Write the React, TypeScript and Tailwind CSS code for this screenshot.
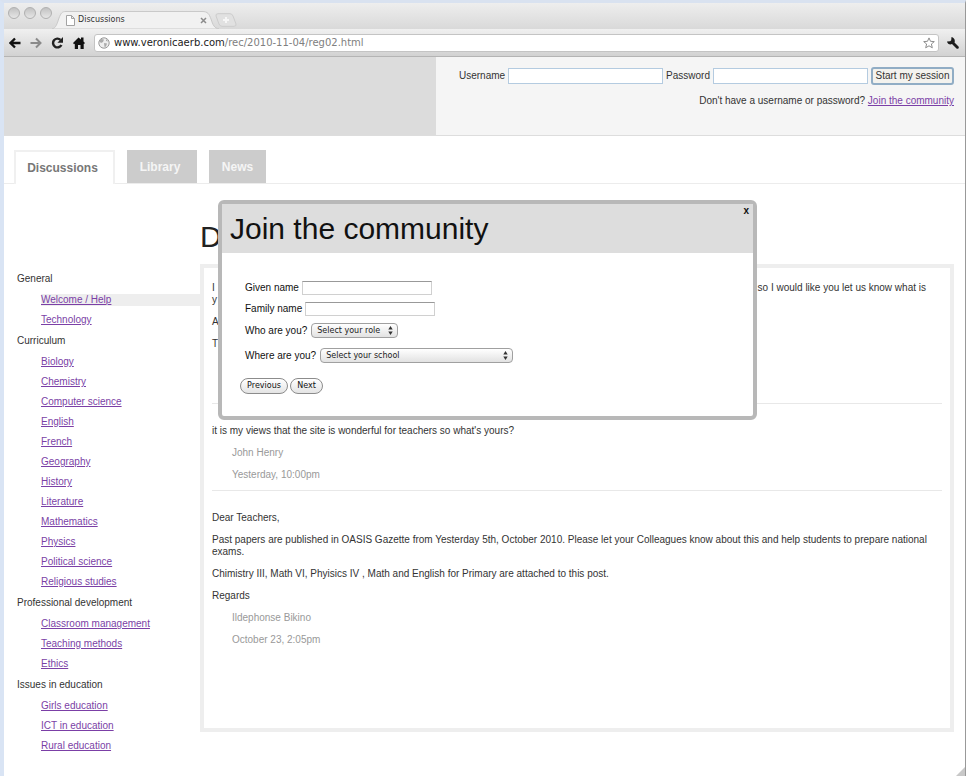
import type { ReactNode } from "react";

const groups = [
  { title: "General", items: ["Welcome / Help", "Technology"] },
  {
    title: "Curriculum",
    items: [
      "Biology",
      "Chemistry",
      "Computer science",
      "English",
      "French",
      "Geography",
      "History",
      "Literature",
      "Mathematics",
      "Physics",
      "Political science",
      "Religious studies",
    ],
  },
  {
    title: "Professional development",
    items: ["Classroom management", "Teaching methods", "Ethics"],
  },
  {
    title: "Issues in education",
    items: ["Girls education", "ICT in education", "Rural education"],
  },
];

function BrowserChrome() {
  return (
    <header className="border-b border-[#b4b4b4] font-['DejaVu_Sans',sans-serif]">
      <div className="flex h-[26px] items-end bg-linear-to-b from-[#eeeeee] to-[#d9d9d9]">
        <div className="flex gap-1 self-start pt-1 pl-1">
          {["Close window", "Minimize window", "Zoom window"].map((name) => (
            <button
              key={name}
              aria-label={name}
              className="size-3 rounded-full border border-[#b0b0b0] bg-linear-to-b from-[#c2c2c2] to-[#e6e6e6]"
            />
          ))}
        </div>
        <div className="relative flex h-[18px] w-[167px] items-center pr-[12px] pl-[13px]">
          <svg className="absolute inset-0" width="167" height="18" viewBox="0 0 167 18" aria-hidden="true">
            <path
              d="M0 18C4 17 5 13 7 7C9 2 10 .5 14 .5H150C156 .5 157 3 159 8C161 14 162 17 167 18Z"
              fill="#f1f1f1"
              stroke="#c9c9c9"
            />
          </svg>
          <svg className="relative ml-px" width="9" height="11" viewBox="0 0 9 11" aria-hidden="true">
            <path d="M.5.5H5.5L8.5 3.5V10.5H.5ZM5.5.5V3.5H8.5" fill="#fff" stroke="#a3a3a3" />
          </svg>
          <span className="relative ml-[3px] text-[8px] leading-3 text-[#333]">Discussions</span>
          <button aria-label="Close tab" className="relative ml-auto">
            <svg width="7" height="7" viewBox="0 0 7 7" aria-hidden="true">
              <path d="M1 1L6 6M6 1L1 6" stroke="#8c8c8c" strokeWidth="1.5" />
            </svg>
          </button>
        </div>
        <button aria-label="New tab" className="mb-[2px] -ml-1">
          <svg width="22" height="14" viewBox="0 0 22 14" aria-hidden="true">
            <path
              d="M3 .7H15Q17 .7 18 3L21 11Q21.500 13.300 19 13.300H7Q5 13.300 4 11L1 3Q.5 .7 3 .7Z"
              fill="#e1e1e1"
              stroke="#cccccc"
            />
            <path d="M11 4V10M8 7H14" stroke="#f6f6f6" strokeWidth="2" />
          </svg>
        </button>
      </div>
      <div className="flex h-[27px] items-center bg-linear-to-b from-[#f0f0f0] to-[#d2d2d2] pr-[6px] pl-[5px]">
        <div className="flex w-[85px] items-center gap-[9px]">
          <button aria-label="Back">
            <svg width="12" height="12" viewBox="0 0 12 12" aria-hidden="true">
              <path d="M11.500 6H2M6 1.500L1.500 6L6 10.500" fill="none" stroke="#111" strokeWidth="2.300" />
            </svg>
          </button>
          <button aria-label="Forward">
            <svg width="12" height="12" viewBox="0 0 12 12" aria-hidden="true">
              <path d="M.5 6H10M6 1.500L10.500 6L6 10.500" fill="none" stroke="#8a8a8a" strokeWidth="2" />
            </svg>
          </button>
          <button aria-label="Reload">
            <svg width="13" height="12" viewBox="0 0 13 12" aria-hidden="true">
              <path d="M9.500 2.800A4.400 4.400 0 1 0 10.400 8" fill="none" stroke="#222" strokeWidth="2.400" />
              <path d="M12 0V5.800H6.400Z" fill="#222" />
            </svg>
          </button>
          <button aria-label="Home">
            <svg width="12" height="12" viewBox="0 0 12 12" aria-hidden="true">
              <path d="M5.500 .5L8 2.500V.5H10.500V4.500L12 6L11 7L10.700 6.800V12H7.500V8H5V12H1.800V6.800L1 7.200L0 6Z" fill="#111" />
            </svg>
          </button>
        </div>
        <div className="flex h-[18px] flex-1 items-center rounded-[3px] border border-[#c4c4c4] bg-white px-[3px]">
          <svg width="12" height="12" viewBox="0 0 12 12" aria-hidden="true">
            <circle cx="6" cy="6" r="5.200" fill="#eee" stroke="#999" />
            <path d="M3 2L6 2.500L5 5L3 6L1 4ZM6 6L9 6.500L8 9.500L6.500 10ZM8 2L10.500 4.500L8 4Z" fill="#aaa" />
          </svg>
          <div className="ml-1 flex-1 text-[10px] leading-4 text-[#808080]">
            <span className="text-[#222]">www.veronicaerb.com</span>/rec/2010-11-04/reg02.html
          </div>
          <button aria-label="Bookmark this page">
            <svg width="12" height="12" viewBox="0 0 12 12" aria-hidden="true">
              <path
                d="M6 .9L7.500 4.300L11.300 4.600L8.400 7L9.300 10.800L6 8.800L2.700 10.800L3.600 7L.7 4.600L4.500 4.300Z"
                fill="#fff"
                stroke="#8c8c8c"
              />
            </svg>
          </button>
        </div>
        <button aria-label="Tools" className="ml-2">
          <svg width="12" height="12" viewBox="0 0 12 12" aria-hidden="true">
            <path
              d="M4.500 0L4.200 3.200L3.200 4.200L0 4.500C.5 7 3 8 5 7L9.500 11.500C11 12.500 12.500 11 11.500 9.500L7.500 5.500C8.500 3 7 .5 4.500 0Z"
              fill="#1c1c1c"
            />
          </svg>
        </button>
      </div>
    </header>
  );
}

function LoginBar() {
  return (
    <div className="flex h-[79px] border-b border-[#dddddd] bg-[#f5f5f5]">
      <div className="w-[45%] bg-[#dcdcdc]" />
      <form className="flex-1 pt-[10px] pr-[11px]" onSubmit={(e) => e.preventDefault()}>
        <div className="flex items-center justify-end">
          <label htmlFor="username">Username</label>
          <input id="username" className="ml-[3px] h-4 w-[155px] border border-[#b4cbe0] bg-white px-1" />
          <label htmlFor="password" className="ml-[3px]">
            Password
          </label>
          <input
            id="password"
            type="password"
            className="ml-[3px] h-4 w-[155px] border border-[#b4cbe0] bg-white px-1"
          />
          <button className="ml-[3px] h-[18px] w-[83px] rounded-[3px] border-2 border-[#91adc5] bg-[#f3f2ee] leading-3 whitespace-nowrap">
            Start my session
          </button>
        </div>
        <p className="mt-[10px] text-right">
          Don't have a username or password?{" "}
          <a href="#join" className="text-[#7b3fa6] underline">
            Join the community
          </a>
        </p>
      </form>
    </div>
  );
}

function Tabs() {
  return (
    <nav className="flex h-12 items-end gap-3 border-b border-[#ececec] pl-[10px] text-[13px] font-bold">
      <a
        href="#discussions"
        className="-mb-px flex h-[34px] w-[101px] items-center justify-center border-2 border-b-0 border-[#f0f0f0] bg-white pr-1 text-[12px] text-[#777777]"
      >
        Discussions
      </a>
      <a
        href="#library"
        className="flex h-[33px] w-[70px] items-center justify-center bg-[#cccccc] pr-1 text-[12px] text-[#f5f5f5]"
      >
        Library
      </a>
      <a
        href="#news"
        className="flex h-[33px] w-[57px] items-center justify-center bg-[#cccccc] text-[12px] text-[#f5f5f5]"
      >
        News
      </a>
    </nav>
  );
}

function Sidebar() {
  return (
    <nav className="w-[196px] pt-[84px]">
      {groups.map((group) => (
        <section key={group.title}>
          <h2 className="ml-[13px] h-[22px] leading-[22px]">{group.title}</h2>
          <ul className="ml-[37px]">
            {group.items.map((item) => (
              <li key={item} className="py-1">
                <a
                  href="#topic"
                  className={
                    item === "Welcome / Help"
                      ? "block bg-[#eeeeee] text-[#7b3fa6] underline"
                      : "block text-[#7b3fa6] underline"
                  }
                >
                  {item}
                </a>
              </li>
            ))}
          </ul>
        </section>
      ))}
    </nav>
  );
}

function Post({ children, author, date }: { children: ReactNode; author?: string; date?: string }) {
  return (
    <article className="flex flex-col gap-[10px]">
      {children}
      <p className="min-h-3 pl-5 text-[#999999]">{author}</p>
      <p className="min-h-3 pl-5 text-[#999999]">{date}</p>
    </article>
  );
}

function Discussions() {
  return (
    <main className="flex-1 pt-[35px] pr-[11px]">
      <h1 className="h-[45px] text-[30px] leading-9 text-[#222]">D</h1>
      <div className="min-h-[468px] border-4 border-[#eeeeee] px-2 pt-[14px]">
        <Post>
          <div>
            <div className="flex justify-between pr-4">
              <span>I</span>
              <span>so I would like you let us know what is</span>
            </div>
            <div>y</div>
          </div>
          <p>A</p>
          <p>T</p>
        </Post>
        <hr className="mt-[9px] mb-[21px] border-[#e8e8e8]" />
        <Post author="John Henry" date="Yesterday, 10:00pm">
          <p>it is my views that the site is wonderful for teachers so what's yours?</p>
        </Post>
        <hr className="mt-[9px] mb-[21px] border-[#e8e8e8]" />
        <Post author="Ildephonse Bikino" date="October 23, 2:05pm">
          <p>Dear Teachers,</p>
          <p>
            Past papers are published in OASIS Gazette from Yesterday 5th, October 2010. Please let your Colleagues know
            about this and help students to prepare national exams.
          </p>
          <p>Chimistry III, Math VI, Phyisics IV , Math and English for Primary are attached to this post.</p>
          <p>Regards</p>
        </Post>
      </div>
    </main>
  );
}

function PopUp({ id, text, width }: { id: string; text: string; width: string }) {
  return (
    <div className={`relative h-[15px] ${width}`}>
      <select
        id={id}
        className="block size-full appearance-none rounded-[4px] border border-[#a0a0a0] bg-linear-to-b from-white to-[#e2e2e2] pl-[5px] font-['DejaVu_Sans',sans-serif] text-[8px] leading-3 text-[#222]"
      >
        <option>{text}</option>
      </select>
      <svg
        className="pointer-events-none absolute top-[3px] right-[5px]"
        width="5"
        height="9"
        viewBox="0 0 5 9"
        aria-hidden="true"
      >
        <path d="M2.500 0L4.700 3.500H.3ZM2.500 9L.3 5.500H4.700Z" fill="#333" />
      </svg>
    </div>
  );
}

function JoinDialog() {
  const field = "h-[14px] w-[130px] border border-[#d0d0d0] border-t-[#999999] bg-white px-1";
  const pill =
    "h-4 rounded-full border border-[#8c8c8c] bg-linear-to-b from-white to-[#e4e4e4] font-['DejaVu_Sans',sans-serif] text-[8px] leading-3";
  return (
    <div
      role="dialog"
      aria-labelledby="join-title"
      className="absolute top-[16px] left-[214px] w-[539px] rounded-[6px] border-4 border-[#b8b8b8] bg-white text-[#111]"
    >
      <div className="flex h-[49px] items-start justify-between bg-[#dddddd] pr-1 pl-[8px]">
        <h2 id="join-title" className="pt-[7px] text-[30px] leading-9">
          Join the community
        </h2>
        <button aria-label="Close" className="pt-[1px] font-bold">
          x
        </button>
      </div>
      <form className="pt-[28px] pb-[22px] pl-[18px]" onSubmit={(e) => e.preventDefault()}>
        <div className="flex flex-col gap-[7px] pl-[5px]">
          <div className="flex items-center gap-[3px]">
            <label htmlFor="given">Given name</label>
            <input id="given" className={field} />
          </div>
          <div className="flex items-center gap-[3px]">
            <label htmlFor="family">Family name</label>
            <input id="family" className={field} />
          </div>
          <div className="flex items-center gap-1">
            <label htmlFor="role">Who are you?</label>
            <PopUp id="role" text="Select your role" width="w-[87px]" />
          </div>
          <div className="mt-[3px] flex items-center gap-1">
            <label htmlFor="school">Where are you?</label>
            <PopUp id="school" text="Select your school" width="w-[193px]" />
          </div>
        </div>
        <div className="mt-[15px] flex gap-[2px]">
          <button className={`${pill} w-[48px]`}>Previous</button>
          <button className={`${pill} w-[33px]`}>Next</button>
        </div>
      </form>
    </div>
  );
}

export default function App() {
  return (
    <div className="relative min-h-screen border-t-[3px] border-r border-l-4 border-t-[#d9e2f0] border-r-[#999999] border-l-[#d9e4f4] bg-white font-['Liberation_Sans',Arial,sans-serif] text-[10px] leading-3 text-[#333333]">
      <BrowserChrome />
      <LoginBar />
      <Tabs />
      <div className="relative flex">
        <Sidebar />
        <Discussions />
        <JoinDialog />
      </div>
      <svg className="absolute right-0 bottom-0" width="9" height="9" viewBox="0 0 9 9" aria-hidden="true">
        <path d="M9 0V9H0Z" fill="#c8c8c8" />
      </svg>
    </div>
  );
}
